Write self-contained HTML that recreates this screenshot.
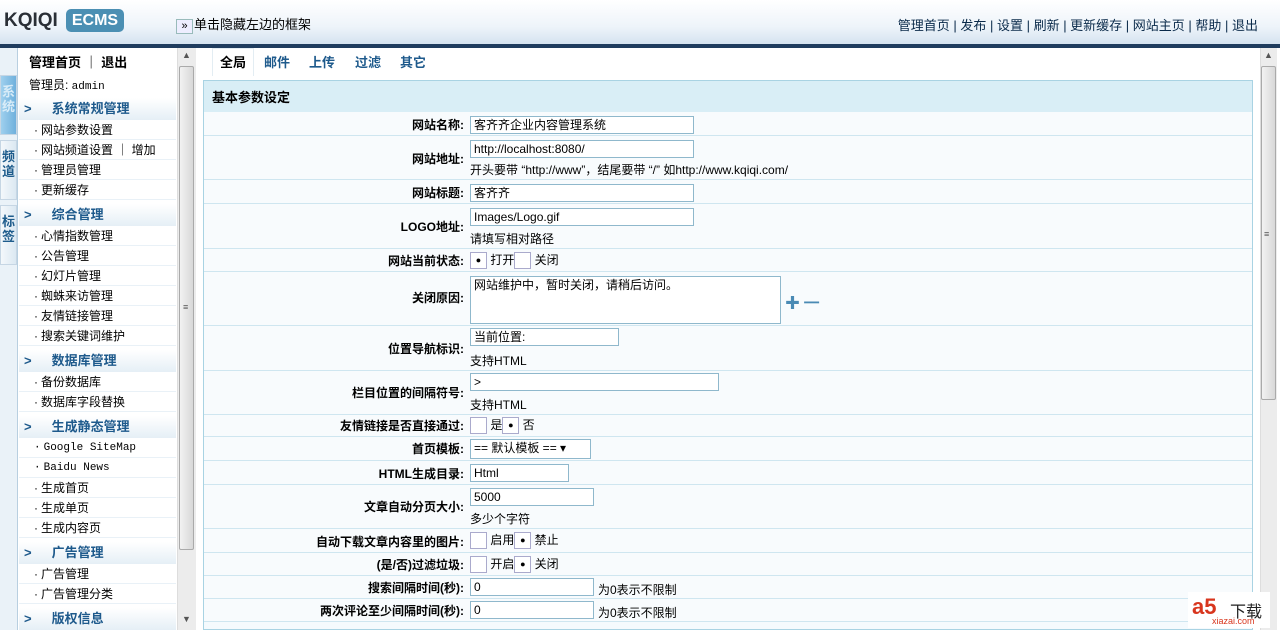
<!DOCTYPE html>
<html><head><meta charset="utf-8"><style>
*{margin:0;padding:0;box-sizing:border-box}
body{width:1280px;height:630px;overflow:hidden;background:#fff;font:12px "Liberation Sans","Noto Sans CJK SC",sans-serif;color:#000;position:relative}
.a{position:absolute}
#hd{left:0;top:0;width:1280px;height:44px;background:linear-gradient(#fff,#eef4fa 60%,#d5e3f0)}
#bar{left:0;top:44px;width:1280px;height:4px;background:#1f3c5e}
.logo{left:4px;top:10px;font:bold 19px "Liberation Sans",sans-serif;color:#2a2f36;letter-spacing:0px}
.ecms{left:66px;top:9px;width:58px;height:23px;background:#4b8fb3;border-radius:5px;color:#fff;font:bold 16px "Liberation Sans",sans-serif;text-align:center;line-height:23px}
.hide{left:176px;top:14px;font-size:13px}
.hide b{display:inline-block;width:17px;height:15px;border:1px solid #9bb;background:#eef;font:11px sans-serif;line-height:13px;text-align:center;margin-right:1px}
.nav{right:22px;top:15px;font-size:13px;color:#0a2a4a}
#tabs{left:0;top:48px;width:18px;height:582px;background:#eaf2f8;border-right:1px solid #b8cfe0}
.vt{left:0;width:17px;height:60px;background:linear-gradient(90deg,#f4f8fb,#dbe8f2);border:1px solid #c6d6e4;font-size:13px;font-weight:bold;color:#1e5c8c;text-align:center;line-height:15px;padding-top:8px}
.vt.on{background:linear-gradient(90deg,#9fd0ee,#6fb0dc);color:#d8ecf8}
#menu{left:19px;top:48px;width:157px;height:582px;background:#fff}
.mi{left:0;width:157px;height:20px;line-height:20px;padding-left:15px;font-size:12px;border-bottom:1px solid #e9f1f7}
.mi:before{content:"·";margin-right:3px}
.sec{left:0;width:157px;height:22px;line-height:22px;background:linear-gradient(#fff,#e5eff6);font-size:13px;font-weight:bold;color:#1e5a8c;padding-left:5px}
.sec span{margin-left:20px}
.sb{background:#ececec;border-left:1px solid #ddd}
.thumb{background:linear-gradient(90deg,#f2f2f2,#d8d8d8);border:1px solid #aaa;border-radius:2px}
#rt{left:196px;top:48px;width:1064px;height:582px;background:#fff}
.tb{top:52px;font-size:13px;font-weight:bold;color:#1e5a8c}
#panel{left:203px;top:80px;width:1050px;height:550px;border:1px solid #a9d3e3;background:#f5fafd}
.ph{left:0;top:0;width:1048px;height:31px;background:#d9eef6;font-size:13px;font-weight:bold;line-height:34px;padding-left:8px}
.row{left:0;width:1048px;border-bottom:1px solid #cfe6f0;background:#f8fbfd}
.lb{position:absolute;right:788px;font-weight:bold;font-size:12px;white-space:nowrap}
.in{position:absolute;left:266px;height:18px;border:1px solid #8fb8cc;background:#fff;padding-left:3px;line-height:16px;font-size:12px}
.tx{position:absolute;left:266px;font-size:12px;white-space:nowrap}
.rd{display:inline-block;width:17px;height:17px;border:1px solid #aac;background:#fff;vertical-align:middle;text-align:center;line-height:15px;font-size:9px}
</style></head><body>
<div class="a" id="hd"></div><div class="a" id="bar"></div>
<div class="a logo">KQIQI</div><div class="a ecms">ECMS</div>
<div class="a hide"><b>»</b>单击隐藏左边的框架</div>
<div class="a nav">管理首页 | 发布 | 设置 | 刷新 | 更新缓存 | 网站主页 | 帮助 | 退出</div>
<div class="a" id="tabs"></div>
<div class="a vt on" style="top:75px">系<br>统</div>
<div class="a vt" style="top:140px">频<br>道</div>
<div class="a vt" style="top:205px">标<br>签</div>
<div class="a" id="menu">
<div class="a" style="left:10px;top:4px;font-size:13px;font-weight:bold">管理首页 ｜ 退出</div>
<div class="a" style="left:10px;top:28px;font-size:12px">管理员: <span style="font-family:'Liberation Mono';font-size:11px">admin</span></div>
<div class="a sec" style="top:50px">&gt;<span>系统常规管理</span></div>
<div class="a mi" style="top:72px">网站参数设置</div>
<div class="a mi" style="top:92px">网站频道设置 ｜ 增加</div>
<div class="a mi" style="top:112px">管理员管理</div>
<div class="a mi" style="top:132px">更新缓存</div>
<div class="a sec" style="top:156px">&gt;<span>综合管理</span></div>
<div class="a mi" style="top:178px">心情指数管理</div>
<div class="a mi" style="top:198px">公告管理</div>
<div class="a mi" style="top:218px">幻灯片管理</div>
<div class="a mi" style="top:238px">蜘蛛来访管理</div>
<div class="a mi" style="top:258px">友情链接管理</div>
<div class="a mi" style="top:278px">搜索关键词维护</div>
<div class="a sec" style="top:302px">&gt;<span>数据库管理</span></div>
<div class="a mi" style="top:324px">备份数据库</div>
<div class="a mi" style="top:344px">数据库字段替换</div>
<div class="a sec" style="top:368px">&gt;<span>生成静态管理</span></div>
<div class="a mi" style="top:390px;font-family:'Liberation Mono';font-size:11px">Google SiteMap</div>
<div class="a mi" style="top:410px;font-family:'Liberation Mono';font-size:11px">Baidu News</div>
<div class="a mi" style="top:430px">生成首页</div>
<div class="a mi" style="top:450px">生成单页</div>
<div class="a mi" style="top:470px">生成内容页</div>
<div class="a sec" style="top:494px">&gt;<span>广告管理</span></div>
<div class="a mi" style="top:516px">广告管理</div>
<div class="a mi" style="top:536px">广告管理分类</div>
<div class="a sec" style="top:560px">&gt;<span>版权信息</span></div>
</div>
<div class="a sb" style="left:177px;top:48px;width:19px;height:582px"></div>
<div class="a thumb" style="left:179px;top:66px;width:15px;height:484px"></div>
<div class="a" style="left:183px;top:302px;font-size:9px;color:#555">≡</div>
<div class="a" style="left:182px;top:50px;font-size:9px;color:#555">▲</div>
<div class="a" style="left:182px;top:614px;font-size:9px;color:#555">▼</div>
<div class="a" id="rt"></div>
<div class="a" style="left:212px;top:48px;width:42px;height:28px;background:#fff;border:1px solid #e3edf3;border-bottom:none"></div>
<div class="a tb" style="left:220px;color:#000">全局</div>
<div class="a tb" style="left:264px">邮件</div>
<div class="a tb" style="left:309px">上传</div>
<div class="a tb" style="left:355px">过滤</div>
<div class="a tb" style="left:400px">其它</div>
<div class="a" id="panel">
<div class="a ph">基本参数设定</div>
<div class="a row" style="top:31px;height:24px"><span class="lb" style="top:4px">网站名称:</span><span class="in" style="top:4px;width:224px">客齐齐企业内容管理系统</span></div>
<div class="a row" style="top:55px;height:44px"><span class="lb" style="top:14px">网站地址:</span><span class="in" style="top:4px;width:224px">http://localhost:8080/</span><span class="tx" style="top:25px">开头要带 “http://www”，结尾要带 “/” 如http://www.kqiqi.com/</span></div>
<div class="a row" style="top:99px;height:24px"><span class="lb" style="top:4px">网站标题:</span><span class="in" style="top:4px;width:224px">客齐齐</span></div>
<div class="a row" style="top:123px;height:45px"><span class="lb" style="top:14px">LOGO地址:</span><span class="in" style="top:4px;width:224px">Images/Logo.gif</span><span class="tx" style="top:26px">请填写相对路径</span></div>
<div class="a row" style="top:168px;height:23px"><span class="lb" style="top:3px">网站当前状态:</span><span class="tx" style="top:2px"><span class="rd">●</span> 打开<span class="rd"></span> 关闭</span></div>
<div class="a row" style="top:191px;height:54px"><span class="lb" style="top:17px">关闭原因:</span><span class="in" style="top:4px;width:311px;height:48px">网站维护中，暂时关闭，请稍后访问。</span><span class="tx" style="left:581px;top:20px;color:#4a8ab4;font-weight:bold;font-size:15px">✚ ━</span></div>
<div class="a row" style="top:245px;height:45px"><span class="lb" style="top:14px">位置导航标识:</span><span class="in" style="top:2px;width:149px">当前位置:</span><span class="tx" style="top:26px">支持HTML</span></div>
<div class="a row" style="top:290px;height:44px"><span class="lb" style="top:13px">栏目位置的间隔符号:</span><span class="in" style="top:2px;width:249px">&gt;</span><span class="tx" style="top:25px">支持HTML</span></div>
<div class="a row" style="top:334px;height:22px"><span class="lb" style="top:2px">友情链接是否直接通过:</span><span class="tx" style="top:1px"><span class="rd"></span> 是<span class="rd">●</span> 否</span></div>
<div class="a row" style="top:356px;height:24px"><span class="lb" style="top:3px">首页模板:</span><span class="in" style="top:2px;width:121px;height:20px">== 默认模板 ==  ▾</span></div>
<div class="a row" style="top:380px;height:24px"><span class="lb" style="top:4px">HTML生成目录:</span><span class="in" style="top:3px;width:99px">Html</span></div>
<div class="a row" style="top:404px;height:44px"><span class="lb" style="top:13px">文章自动分页大小:</span><span class="in" style="top:3px;width:124px">5000</span><span class="tx" style="top:25px">多少个字符</span></div>
<div class="a row" style="top:448px;height:24px"><span class="lb" style="top:4px">自动下载文章内容里的图片:</span><span class="tx" style="top:2px"><span class="rd"></span> 启用<span class="rd">●</span> 禁止</span></div>
<div class="a row" style="top:472px;height:23px"><span class="lb" style="top:3px">(是/否)过滤垃圾:</span><span class="tx" style="top:2px"><span class="rd"></span> 开启<span class="rd">●</span> 关闭</span></div>
<div class="a row" style="top:495px;height:23px"><span class="lb" style="top:3px">搜索间隔时间(秒):</span><span class="in" style="top:2px;width:124px">0</span><span class="tx" style="left:394px;top:5px">为0表示不限制</span></div>
<div class="a row" style="top:518px;height:23px"><span class="lb" style="top:3px">两次评论至少间隔时间(秒):</span><span class="in" style="top:2px;width:124px">0</span><span class="tx" style="left:394px;top:5px">为0表示不限制</span></div>
</div>
<div class="a sb" style="left:1260px;top:48px;width:17px;height:582px"></div>
<div class="a thumb" style="left:1261px;top:66px;width:15px;height:334px"></div>
<div class="a" style="left:1264px;top:229px;font-size:9px;color:#555">≡</div>
<div class="a" style="left:1264px;top:50px;font-size:9px;color:#555">▲</div>
<div class="a" style="left:1188px;top:592px;width:82px;height:36px;background:#fff"></div>
<div class="a" style="left:1192px;top:594px;font:bold 22px 'Liberation Sans',sans-serif;color:#d8361e">a5</div>
<div class="a" style="left:1230px;top:598px;font-size:16px;color:#222">下载</div>
<div class="a" style="left:1212px;top:616px;font-size:9px;color:#d8361e">xiazai.com</div>
</body></html>
